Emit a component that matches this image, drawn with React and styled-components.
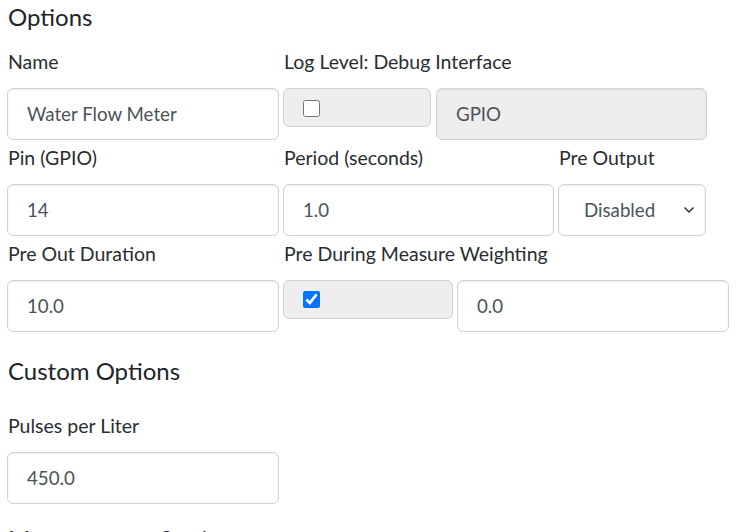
import React from "react";
import styled, { createGlobalStyle } from "styled-components";

const GlobalStyle = createGlobalStyle`
  *{
    box-sizing: border-box;
  }
  body{
    margin: 0;
    background: #fff;
    font-family: Lato, "Open Sans", sans-serif;
    color: #212529;
    overflow: hidden;
  }
`;

const Page = styled.div`
  padding: 0 0 0 7px;
  width: 738px;
  height: 532px;
  overflow: hidden;
`;

const Heading = styled.h5`
  font-size: 24px;
  font-weight: 400;
  line-height: 1.2;
  margin: ${(p) => p.$top || 0}px 0 ${(p) => p.$bottom || 0}px 1px;
`;

const Rows = styled.div`
  display: flex;
  flex-direction: column;
  gap: 4px;
`;

const Row = styled.div`
  display: flex;
  gap: 4px;
`;

const Field = styled.div`
  display: flex;
  flex-direction: column;
  width: ${(p) => p.$w}px;
`;

const Label = styled.label`
  font-size: 19.5px;
  line-height: 27px;
  color: #2a2d31;
  margin: 0 0 13px 1px;
  white-space: nowrap;
`;

const Group = styled.div`
  display: flex;
  gap: ${(p) => p.$gap || 5}px;
  align-items: flex-start;
`;

const Input = styled.input`
  width: ${(p) => p.$w}px;
  height: 52px;
  padding: 0 19px;
  font-family: inherit;
  font-size: 18.7px;
  color: #4d5359;
  background: ${(p) => (p.disabled ? "#eeeeee" : "#fff")};
  border: 1px solid #cfd3d7;
  border-radius: 6px;
  box-shadow: inset 0 1px 2px rgba(0, 0, 0, 0.08);
  outline: none;
`;

const CheckBox = styled.div`
  width: ${(p) => p.$w}px;
  height: 39px;
  padding: ${(p) => p.$top || 11}px 0 0 19px;
  background: #eeeeee;
  border: 1px solid #cfd3d7;
  border-radius: 6px;

  input{
    width: 17px;
    height: 17px;
    margin: 0;
  }
`;

const SelectWrap = styled.div`
  position: relative;
  width: ${(p) => p.$w}px;
  height: 52px;

  svg{
    position: absolute;
    right: 11px;
    top: 22px;
    pointer-events: none;
  }
`;

const Select = styled.select`
  appearance: none;
  width: 100%;
  height: 100%;
  padding: 0 0 0 25px;
  font-family: inherit;
  font-size: 18.7px;
  color: #4d5359;
  background: #fff;
  border: 1px solid #cfd3d7;
  border-radius: 6px;
  box-shadow: inset 0 1px 2px rgba(0, 0, 0, 0.08);
  outline: none;
`;

const Chevron = () => (
  <svg width="12" height="8" viewBox="0 0 12 8">
    <path d="M1.5 1.5 L6 6 L10.5 1.5" fill="none" stroke="#333" strokeWidth="1.5" />
  </svg>
);

const App = () => {
  return (
    <Page>
      <GlobalStyle />
      <Heading $top={3} $bottom={16}>Options</Heading>
      <Rows>
        <Row>
          <Field $w={272}>
            <Label>Name</Label>
            <Input $w={272} defaultValue="Water Flow Meter" />
          </Field>
          <Field $w={424}>
            <Label>Log Level: Debug Interface</Label>
            <Group>
              <CheckBox $w={148}>
                <input type="checkbox" />
              </CheckBox>
              <Input $w={271} disabled defaultValue="GPIO" />
            </Group>
          </Field>
        </Row>
        <Row>
          <Field $w={272}>
            <Label>Pin (GPIO)</Label>
            <Input $w={272} defaultValue="14" />
          </Field>
          <Field $w={271}>
            <Label>Period (seconds)</Label>
            <Input $w={271} defaultValue="1.0" />
          </Field>
          <Field $w={148}>
            <Label>Pre Output</Label>
            <SelectWrap $w={148}>
              <Select defaultValue="disabled">
                <option value="disabled">Disabled</option>
              </Select>
              <Chevron />
            </SelectWrap>
          </Field>
        </Row>
        <Row>
          <Field $w={272}>
            <Label>Pre Out Duration</Label>
            <Input $w={272} defaultValue="10.0" />
          </Field>
          <Field $w={446}>
            <Label>Pre During Measure Weighting</Label>
            <Group $gap={4}>
              <CheckBox $w={170} $top={10}>
                <input type="checkbox" defaultChecked />
              </CheckBox>
              <Input $w={272} defaultValue="0.0" />
            </Group>
          </Field>
        </Row>
      </Rows>
      <Heading $top={25} $bottom={26}>Custom Options</Heading>
      <Field $w={272}>
        <Label>Pulses per Liter</Label>
        <Input $w={272} defaultValue="450.0" />
      </Field>
      <Heading $top={21}>Measurement Settings</Heading>
    </Page>
  );
};

export default App;
